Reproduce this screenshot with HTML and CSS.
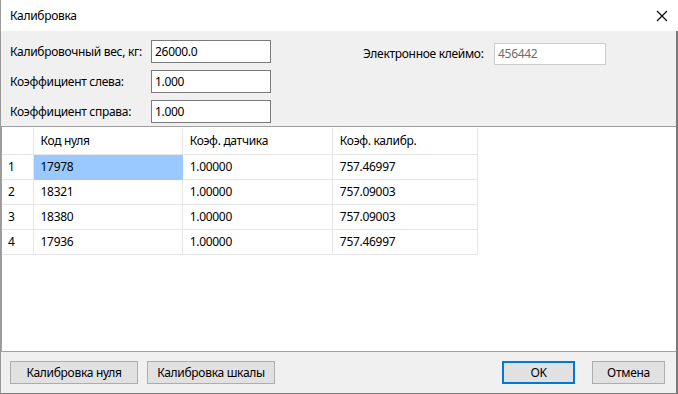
FILE: index.html
```html
<!DOCTYPE html>
<html lang="ru">
<head>
<meta charset="UTF-8" />
<title>Калибровка</title>
<link rel="stylesheet" href="styles.css">
</head>
<body>

<div class="window">
  <div class="titlebar">
    <span class="title">Калибровка</span>
    <svg class="close" width="12" height="12" viewBox="0 0 12 12">
      <path d="M1 1 L11 11 M11 1 L1 11" stroke="#000" stroke-width="1.1" fill="none" />
    </svg>
  </div>

  <div class="client">
    <div class="form">
      <div class="fields">
        <label>Калибровочный вес, кг:</label>
        <input class="field" value="26000.0">
        <label>Коэффициент слева:</label>
        <input class="field" value="1.000">
        <label>Коэффициент справа:</label>
        <input class="field" value="1.000">
      </div>
      <div class="fields fields-right">
        <label>Электронное клеймо:</label>
        <input class="field disabled" value="456442" disabled>
      </div>
    </div>

    <div class="grid-panel">
      <table class="grid">
        <thead>
          <tr><th class="rowhead"></th><th class="c1">Код нуля</th><th class="c2">Коэф. датчика</th><th class="c3">Коэф. калибр.</th></tr>
        </thead>
        <tbody>
          <tr><td class="rowhead">1</td><td class="selected">17978</td><td>1.00000</td><td>757.46997</td></tr>
          <tr><td class="rowhead">2</td><td>18321</td><td>1.00000</td><td>757.09003</td></tr>
          <tr><td class="rowhead">3</td><td>18380</td><td>1.00000</td><td>757.09003</td></tr>
          <tr><td class="rowhead">4</td><td>17936</td><td>1.00000</td><td>757.46997</td></tr>
        </tbody>
      </table>
    </div>

    <div class="footer">
      <button class="btn wide">Калибровка нуля</button>
      <button class="btn wide">Калибровка шкалы</button>
      <span class="spacer"></span>
      <button class="btn small default">OK</button>
      <button class="btn small">Отмена</button>
    </div>
  </div>
</div>

</body>
</html>
```

FILE: styles.css
```css
* { box-sizing: border-box; }
body { margin: 0; font-family: "Segoe UI", "Noto Sans", Arial, sans-serif; font-size: 12px; letter-spacing: -0.3px; color: #000; background: #fff; }

.window { width: 678px; height: 394px; display: flex; flex-direction: column; border-left: 1px solid #9a9a9a; }
.titlebar { height: 31px; display: flex; align-items: center; justify-content: space-between; padding: 0 10px 0 9px; background: #fff; }
.title { font-size: 12px; }

.client { flex: 1; display: flex; flex-direction: column; background: #f0f0f0; border-right: 2px solid #7a7a7a; border-bottom: 1px solid #7a7a7a; }

.form { height: 95px; display: flex; align-items: flex-start; padding: 9px 0 0 9px; }
.fields { display: grid; grid-template-columns: 141px 120px; grid-auto-rows: 23px; row-gap: 7px; align-items: center; }
.fields-right { margin-left: 92px; grid-template-columns: 131px 112px; padding-top: 2px; }
.fields-right .field { height: 22px; }
label { white-space: nowrap; }
.field { height: 23px; width: 100%; border: 1px solid #7a7a7a; background: #fff; font: inherit; letter-spacing: inherit; padding: 0 0 0 3px; color: #000; }
.field.disabled { border-color: #cccccc; color: #6d6d6d; background: #fff; }

.grid-panel { height: 226px; background: #fff; border-top: 1px solid #a0a0a0; border-bottom: 1px solid #a0a0a0; border-left: 1px solid #a0a0a0; padding: 1px 0 0 0; }
.grid { border-collapse: collapse; table-layout: fixed; width: 476px; }
.grid th, .grid td { border: 1px solid #e6e6e6; text-align: left; font-weight: normal; padding: 0 0 0 7px; white-space: nowrap; }
.grid thead tr { height: 26px; }
.grid tbody tr { height: 25px; }
.grid th { border-top: none; }
.grid .rowhead { width: 31px; padding-left: 6px; border-left: none; }
.grid .c1 { width: 149px; }
.grid .c2 { width: 150px; }
.grid .c3 { width: 145px; }
.grid td.selected { background: #99c9ff; border-color: #99c9ff; }

.footer { flex: 1; display: flex; align-items: flex-start; padding: 9px 11px 0 9px; gap: 9px; }
.spacer { flex: 1; }
.btn { height: 23px; background: #e1e1e1; border: 1px solid #adadad; font: inherit; letter-spacing: inherit; color: #000; padding: 0; }
.btn.wide { width: 128px; }
.btn.small { width: 73px; }
.btn.default { border: 2px solid #0078d7; margin-right: 8px; }
```
